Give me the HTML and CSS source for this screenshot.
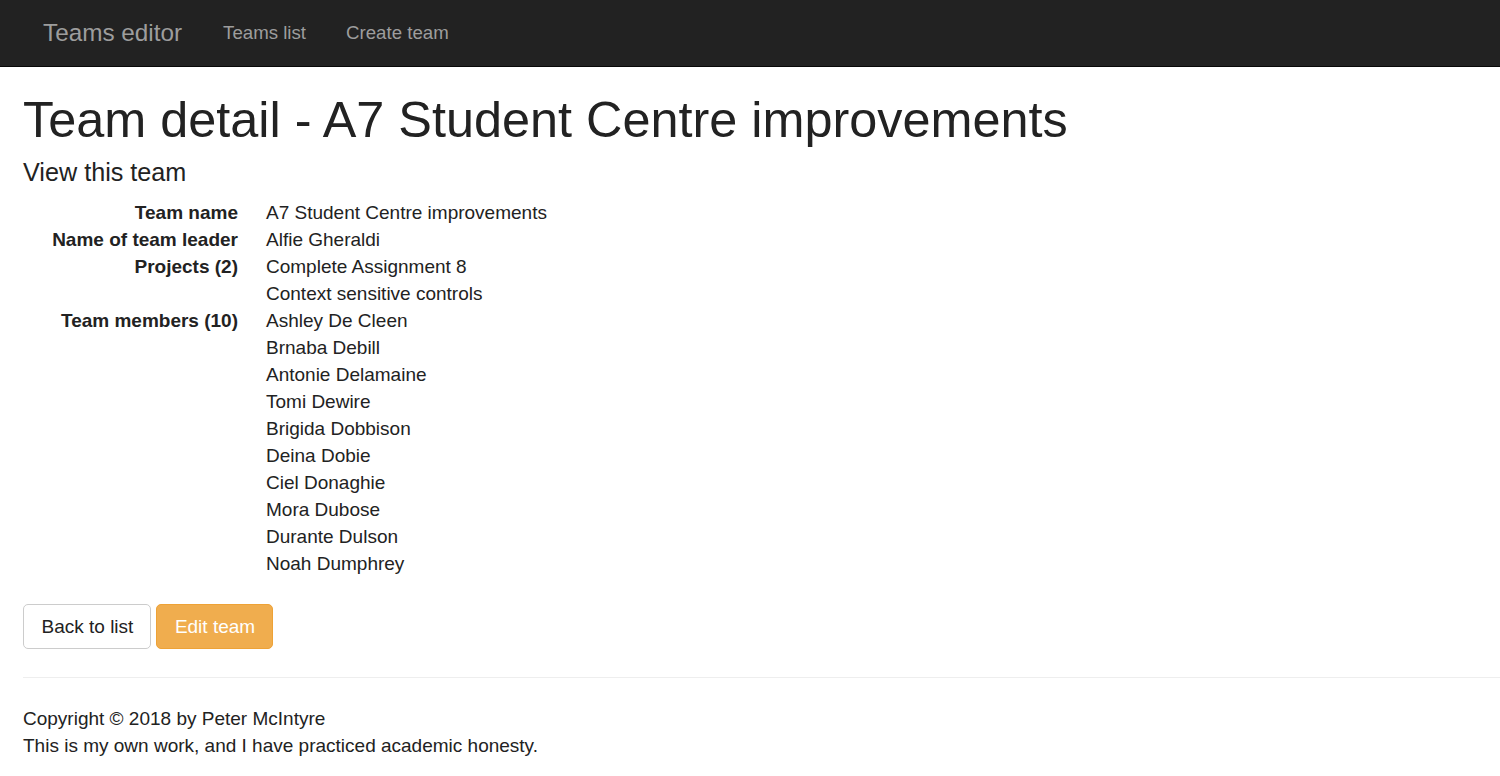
FILE: index.html
```html
<!DOCTYPE html>
<html>
<head>
<meta charset="utf-8">
<title>Team detail</title>
<link rel="stylesheet" href="styles.css">
</head>
<body>
<nav class="navbar">
  <a class="brand" href="#">Teams editor</a>
  <ul class="nav">
    <li><a href="#">Teams list</a></li>
    <li><a href="#">Create team</a></li>
  </ul>
</nav>
<main class="container">
  <h1>Team detail - A7 Student Centre improvements</h1>
  <h4>View this team</h4>
  <dl class="details">
    <dt>Team name</dt>
    <dd>A7 Student Centre improvements</dd>
    <dt>Name of team leader</dt>
    <dd>Alfie Gheraldi</dd>
    <dt>Projects (2)</dt>
    <dd>Complete Assignment 8<br>Context sensitive controls</dd>
    <dt>Team members (10)</dt>
    <dd>Ashley De Cleen<br>Brnaba Debill<br>Antonie Delamaine<br>Tomi Dewire<br>Brigida Dobbison<br>Deina Dobie<br>Ciel Donaghie<br>Mora Dubose<br>Durante Dulson<br>Noah Dumphrey</dd>
  </dl>
  <div class="actions">
    <a class="btn btn-default" href="#">Back to list</a>
    <a class="btn btn-warning" href="#">Edit team</a>
  </div>
  <hr>
  <footer class="footer">
    <p>Copyright © 2018 by Peter McIntyre<br>This is my own work, and I have practiced academic honesty.</p>
  </footer>
</main>
</body>
</html>
```
FILE: styles.css
```css
* { box-sizing: border-box; }
html, body { margin: 0; padding: 0; }
body {
  font-family: "Liberation Sans", Arial, sans-serif;
  font-size: 19px;
  line-height: 27px;
  color: #222;
  background: #fff;
}
a { text-decoration: none; }
.navbar {
  background: #222;
  border-bottom: 1px solid #080808;
  height: 67px;
  display: flex;
  align-items: center;
  padding: 0 20px 0 23px;
}
.brand {
  color: #9d9d9d;
  font-size: 24.3px;
  padding: 0 20px;
  line-height: 64px;
}
.nav {
  display: flex;
  list-style: none;
  margin: 0;
  padding: 0 0 0 1px;
}
.nav a {
  color: #9d9d9d;
  display: block;
  font-size: 18.67px;
  padding: 0 20px;
  line-height: 64px;
}
.container {
  padding: 0 20px 0 23px;
}
h1 {
  font-size: 50.4px;
  font-weight: 500;
  line-height: 1.1;
  margin: 25px 0 12px;
  color: #222;
}
h4 {
  font-size: 25.2px;
  font-weight: 500;
  line-height: 1.1;
  margin: 0 0 12px;
}
.details {
  display: grid;
  grid-template-columns: 215px 1fr;
  column-gap: 28px;
  margin: 0 0 27px;
}
.details dt {
  font-weight: bold;
  text-align: right;
  grid-column: 1;
}
.details dd {
  margin: 0;
  grid-column: 2;
}
.actions {
  display: flex;
  gap: 5px;
}
.btn {
  display: inline-block;
  height: 45px;
  line-height: 27px;
  padding: 8px 17px 8px 17.5px;
  border: 1px solid #ccc;
  border-radius: 5px;
  font-size: 19px;
}
.btn-default { color: #222; background: #fff; border-color: #ccc; }
.btn-warning { color: #fff; background: #f0ad4e; border-color: #eea236; }
hr {
  border: 0;
  border-top: 1px solid #eee;
  margin: 28px -20px 27px 0;
}
.footer p { margin: 0; }
```
